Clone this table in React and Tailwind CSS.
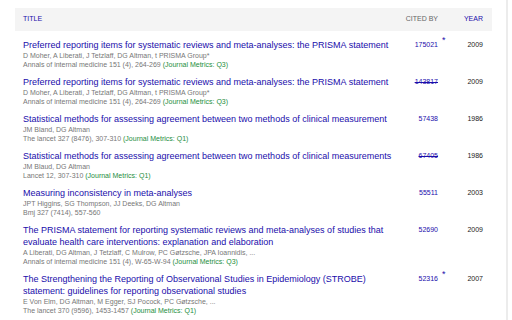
// Scholar-style citations table
import React from "react";

const ROWS = [
  {
    title: "Preferred reporting items for systematic reviews and meta-analyses: the PRISMA statement",
    authors: "D Moher, A Liberati, J Tetzlaff, DG Altman, t PRISMA Group*",
    venue: "Annals of internal medicine 151 (4), 264-269",
    metric: "Q3",
    cited: "175021",
    star: true,
    year: "2009",
  },
  {
    title: "Preferred reporting items for systematic reviews and meta-analyses: the PRISMA statement",
    authors: "D Moher, A Liberati, J Tetzlaff, DG Altman, t PRISMA Group*",
    venue: "Annals of internal medicine 151 (4), 264-269",
    metric: "Q3",
    cited: "143817",
    strike: true,
    year: "2009",
  },
  {
    title: "Statistical methods for assessing agreement between two methods of clinical measurement",
    authors: "JM Bland, DG Altman",
    venue: "The lancet 327 (8476), 307-310",
    metric: "Q1",
    cited: "57438",
    year: "1986",
  },
  {
    title: "Statistical methods for assessing agreement between two methods of clinical measurements",
    authors: "JM Blaud, DG Altman",
    venue: "Lancet 12, 307-310",
    metric: "Q1",
    cited: "67405",
    strike: true,
    year: "1986",
  },
  {
    title: "Measuring inconsistency in meta-analyses",
    authors: "JPT Higgins, SG Thompson, JJ Deeks, DG Altman",
    venue: "Bmj 327 (7414), 557-560",
    cited: "55511",
    year: "2003",
  },
  {
    title: "The PRISMA statement for reporting systematic reviews and meta-analyses of studies that evaluate health care interventions: explanation and elaboration",
    authors: "A Liberati, DG Altman, J Tetzlaff, C Mulrow, PC Gøtzsche, JPA Ioannidis, ...",
    venue: "Annals of internal medicine 151 (4), W-65-W-94",
    metric: "Q3",
    cited: "52690",
    year: "2009",
  },
  {
    title: "The Strengthening the Reporting of Observational Studies in Epidemiology (STROBE) statement: guidelines for reporting observational studies",
    authors: "E Von Elm, DG Altman, M Egger, SJ Pocock, PC Gøtzsche, ...",
    venue: "The lancet 370 (9596), 1453-1457",
    metric: "Q1",
    cited: "52316",
    star: true,
    year: "2007",
  },
];

function Row({ row }) {
  return (
    <div className="flex py-[3.5px]">
      <div className="w-[383px] pl-[8px]">
        <div className="text-[9px] leading-[12px] text-[#1a0dab]">{row.title}</div>
        <div className="text-[7px] leading-[9px] text-[#777]">{row.authors}</div>
        <div className="text-[7px] leading-[9px] text-[#777]">
          {row.venue}
          {row.metric && (
            <span className="text-[#1e8e3e]"> (Journal Metrics: {row.metric})</span>
          )}
        </div>
      </div>
      <div className="w-[49px] pr-[9px] text-right text-[7px] leading-[12px]">
        <span className={`relative text-[#1a0dab] ${row.strike ? "line-through" : ""}`}>
          {row.cited}
          {row.star && (
            <span className="absolute left-full ml-[4px] -top-[5px] text-[9px] leading-none text-[#1a0dab]">
              *
            </span>
          )}
        </span>
      </div>
      <div className="w-[36px] text-right text-[7px] leading-[12px] text-[#222]">{row.year}</div>
      <div className="w-[9px]" />
    </div>
  );
}

export default function App() {
  return (
    <div className="flex w-[512px] h-[320px] bg-white overflow-hidden font-['Liberation_Sans',Arial,sans-serif]">
      <div className="w-[492px] pl-[15px] pt-[8px]">
        <div className="flex items-center h-[23px] bg-[#f4f4f4] text-[7px] uppercase">
          <div className="w-[383px] pl-[8px] text-[#1a0dab]">Title</div>
          <div className="w-[49px] pr-[9px] text-right text-[#666]">Cited by</div>
          <div className="w-[36px] text-right text-[#1a0dab]">Year</div>
        </div>
        <div className="pt-[4px]">
          {ROWS.map((row, i) => (
            <Row key={i} row={row} />
          ))}
        </div>
      </div>
      <div className="w-[14px]" />
      <div className="w-[2px] bg-[#ececec]" />
    </div>
  );
}
